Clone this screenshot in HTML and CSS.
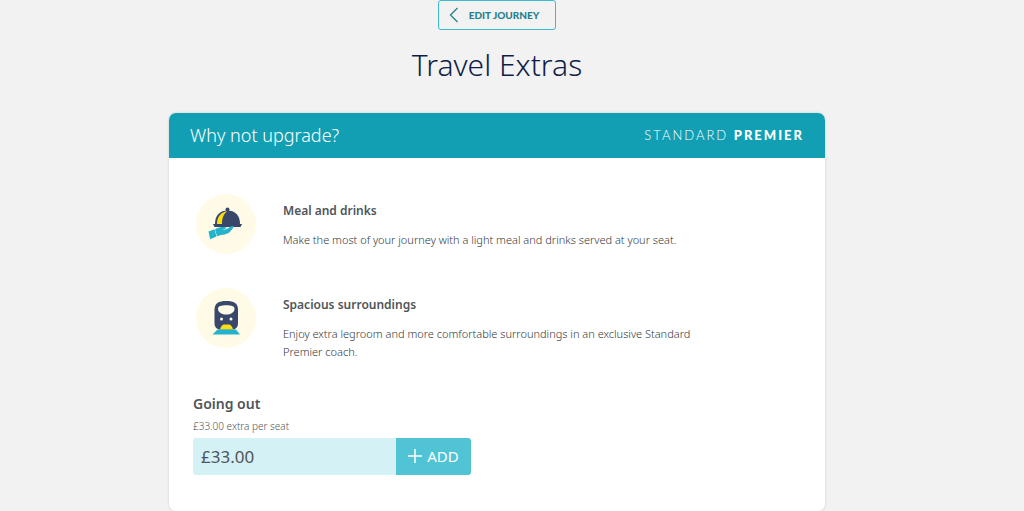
FILE: index.html
```
<!DOCTYPE html>
<html lang="en">
<head>
    <meta charset="UTF-8">
    <meta name="viewport" content="width=device-width, initial-scale=1.0">
    <title>Travel Extras</title>
    <link rel="stylesheet" href="styles.css">
</head>
<body>

    <main class="page">
        <a href="#" class="edit-btn">
            <svg width="10" height="16" viewBox="0 0 10 16" fill="none" stroke="currentColor" stroke-width="1.3" aria-hidden="true">
                <path d="M8.5 1 L1.5 8 L8.5 15"/>
            </svg>
            Edit journey
        </a>

        <h1>Travel Extras</h1>

        <section class="card">
            <div class="card-header">
                <h2>Why not upgrade?</h2>
                <span class="class-name">STANDARD <strong>PREMIER</strong></span>
            </div>

            <div class="card-body">
                <div class="benefit">
                    <!-- Hand holding a serving dish -->
                    <svg class="benefit-icon" viewBox="0 0 60 60" aria-hidden="true">
                        <circle cx="30" cy="30" r="30" fill="#fffbe6"/>
                        <path d="M19 30 C19 21 24 16.5 31.5 16.5 C39 16.5 44 21 44 30 Z" fill="#39486a"/>
                        <circle cx="31.5" cy="15.5" r="2" fill="#39486a"/>
                        <path d="M21 30 C21 23 24.5 18.5 31 17.3 C27 21 26 25 26 30 Z" fill="#fbdd14"/>
                        <path d="M17 30 H46 L44.5 33 H18.5 Z" fill="#39486a"/>
                        <path d="M12.5 37.5 L18.5 35.3 L20.5 42.5 L14.2 45.3 Z" fill="#23b3cc"/>
                        <path d="M19 35.5 C21.5 33.5 24.5 33 28 33 L30.5 33.5 C30 35 28 35.5 26 35.8 C30 36 32.5 34.5 34.5 32.5 C36 31.5 37.5 32 38 32.5 L36 35.5 C33 39.5 30 40.7 26 40.7 L21 42.3 Z" fill="#23b3cc"/>
                    </svg>
                    <div class="benefit-text">
                        <h3>Meal and drinks</h3>
                        <p>Make the most of your journey with a light meal and drinks served at your seat.</p>
                    </div>
                </div>

                <div class="benefit">
                    <!-- Front of a train -->
                    <svg class="benefit-icon" viewBox="0 0 60 60" aria-hidden="true">
                        <circle cx="30" cy="30" r="30" fill="#fffbe6"/>
                        <path d="M18.5 22 C18.5 15 22.5 13 30.3 13 C38 13 42 15 42 22 V35 C42 39 40 41.5 36 41.5 H24.5 C20.5 41.5 18.5 39 18.5 35 Z" fill="#39486a"/>
                        <path d="M22 21 C22 18 25 17.3 30.3 17.3 C35.5 17.3 38.5 18 38.5 21 C38.5 24.5 34.5 26.5 30.3 26.5 C26 26.5 22 24.5 22 21 Z" fill="#fffbe6"/>
                        <circle cx="25.5" cy="31" r="1.5" fill="#fffbe6"/>
                        <circle cx="35" cy="31" r="1.5" fill="#fffbe6"/>
                        <path d="M27.5 36.5 H33.5 C35 37 36.5 39 37 41.5 H24 C24.5 39 26 37 27.5 36.5 Z" fill="#fbdd14"/>
                        <path d="M21.5 41.5 H40 L44 46.5 H16.5 Z" fill="#23b3cc"/>
                    </svg>
                    <div class="benefit-text">
                        <h3>Spacious surroundings</h3>
                        <p>Enjoy extra legroom and more comfortable surroundings in an exclusive Standard Premier coach.</p>
                    </div>
                </div>

                <div class="journey">
                    <h3>Going out</h3>
                    <p>£33.00 extra per seat</p>
                    <div class="price-row">
                        <span class="price">£33.00</span>
                        <button type="button" class="add-btn">
                            <svg width="14" height="14" viewBox="0 0 14 14" stroke="currentColor" stroke-width="1.5" aria-hidden="true">
                                <path d="M7 0 V14 M0 7 H14"/>
                            </svg>
                            ADD
                        </button>
                    </div>
                </div>
            </div>
        </section>
    </main>

</body>
</html>
```
FILE: styles.css
```
* {
    box-sizing: border-box;
}
body {
    font-family: "Noto Sans", "Open Sans", sans-serif;
    background-color: #f2f2f2;
    color: #505559;
    margin: 0;
    padding: 0 30px 0 0;
}
h1, h2, h3, p {
    margin: 0;
}
.page {
    display: flex;
    flex-direction: column;
    align-items: center;
}
.edit-btn {
    display: flex;
    align-items: center;
    gap: 10px;
    height: 30px;
    padding: 0 16px 0 10px;
    border: 1px solid #3cbccf;
    border-radius: 3px;
    color: #26808c;
    font-family: Lato, sans-serif;
    font-size: 10px;
    font-weight: 900;
    text-transform: uppercase;
    text-decoration: none;
}
h1 {
    margin: 16px 0 30px;
    color: #0f1e46;
    font-size: 30px;
    font-weight: 300;
    line-height: 37px;
}

/* Upgrade card */
.card {
    width: 66%;
    background-color: #fff;
    border-radius: 7px;
    box-shadow: 0 0 3px rgba(0, 0, 0, 0.15);
    overflow: hidden;
}
.card-header {
    display: flex;
    justify-content: space-between;
    align-items: center;
    height: 45px;
    padding: 0 21px 2px;
    background-color: #129fb4;
    color: #fff;
}
.card-header h2 {
    font-size: 18px;
    font-weight: 300;
    line-height: 24px;
}
.class-name {
    font-family: Lato, sans-serif;
    font-size: 13px;
    font-weight: 300;
    letter-spacing: 2px;
}
.class-name strong {
    font-weight: 900;
}
.card-body {
    padding: 36px 24px;
}
.benefit {
    display: flex;
    gap: 27px;
    min-height: 60px;
    margin: 0 80px 34px 3px;
}
.benefit-icon {
    flex: none;
    width: 60px;
    height: 60px;
}
.benefit-text {
    padding-top: 8px;
}
.benefit h3 {
    margin-bottom: 11px;
    font-size: 12px;
    font-weight: 600;
    line-height: 18px;
}
.benefit p {
    color: #34383b;
    font-size: 11px;
    font-weight: 300;
    line-height: 18px;
}

/* Price and add button */
.journey h3 {
    font-size: 14px;
    font-weight: 600;
    line-height: 18px;
}
.journey p {
    margin: 5px 0 4px;
    font-size: 10px;
    font-weight: 300;
    line-height: 16px;
}
.price-row {
    display: flex;
    width: 278px;
    height: 37px;
    border-radius: 3px;
    overflow: hidden;
}
.price {
    flex: 1;
    padding-left: 8px;
    background-color: #d4f1f5;
    font-size: 17px;
    line-height: 37px;
}
.add-btn {
    display: flex;
    align-items: center;
    justify-content: center;
    gap: 5px;
    width: 75px;
    padding: 0 0 2px;
    border: none;
    background-color: #50c3d5;
    color: #fff;
    font-family: inherit;
    font-size: 15px;
    cursor: pointer;
}
```
